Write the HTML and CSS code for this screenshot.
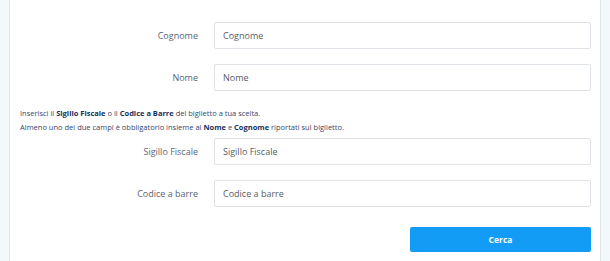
FILE: index.html
```html
<!DOCTYPE html>
<html lang="it">
<head>
    <meta charset="UTF-8">
    <meta name="viewport" content="width=device-width, initial-scale=1.0">
    <title>Verifica biglietto</title>
    <link rel="stylesheet" href="styles.css">
</head>
<body>
    <div class="card">
        <form class="ticket-form">
            <div class="form-row">
                <label for="cognome">Cognome</label>
                <input type="text" id="cognome" placeholder="Cognome">
            </div>

            <div class="form-row">
                <label for="nome">Nome</label>
                <input type="text" id="nome" placeholder="Nome">
            </div>

            <p class="hint">
                Inserisci il <strong>Sigillo Fiscale</strong> o il <strong>Codice a Barre</strong> del biglietto a tua scelta.<br>
                Almeno uno dei due campi è obbligatorio insieme al <strong>Nome</strong> e <strong>Cognome</strong> riportati sul biglietto.
            </p>

            <div class="form-row">
                <label for="sigillo">Sigillo Fiscale</label>
                <input type="text" id="sigillo" placeholder="Sigillo Fiscale">
            </div>

            <div class="form-row form-row-last">
                <label for="barcode">Codice a barre</label>
                <input type="text" id="barcode" placeholder="Codice a barre">
            </div>

            <div class="actions">
                <button type="submit">Cerca</button>
            </div>
        </form>
    </div>
</body>
</html>
```

FILE: styles.css
```css
body {
    font-family: 'Open Sans', 'Noto Sans', sans-serif;
    margin: 0;
    background: #f3f8fc;
    color: #5b6170;
}

.card {
    margin-left: 9px;
    width: 592px;
    height: 261px;
    box-sizing: border-box;
    background: #fff;
    border-left: 1px solid #e2e5e9;
    border-right: 1px solid #e2e5e9;
    padding: 22px 9px 0 10px;
}

.form-row {
    display: grid;
    grid-template-columns: 178px 1fr;
    column-gap: 16px;
    align-items: center;
    margin-bottom: 15px;
}

.form-row-last {
    margin-bottom: 20px;
}

label {
    text-align: right;
    font-size: 9px;
    color: #5d6372;
}

input {
    height: 27px;
    box-sizing: border-box;
    padding: 0 8px;
    border: 1px solid #dfe2e6;
    border-radius: 2px;
    font-family: inherit;
    font-size: 9px;
    color: #444;
    background: #fff;
}

input::placeholder {
    color: #575c66;
}

.hint {
    margin: 0 0 4px;
    font-size: 7.5px;
    line-height: 14px;
    color: #36466a;
}

.hint strong {
    color: #15305c;
}

.actions {
    display: flex;
    justify-content: flex-end;
}

button {
    width: 181px;
    height: 25px;
    border: none;
    border-radius: 2px;
    background: #139cf5;
    color: #fff;
    font-family: inherit;
    font-weight: bold;
    font-size: 8.5px;
    cursor: pointer;
}
```
